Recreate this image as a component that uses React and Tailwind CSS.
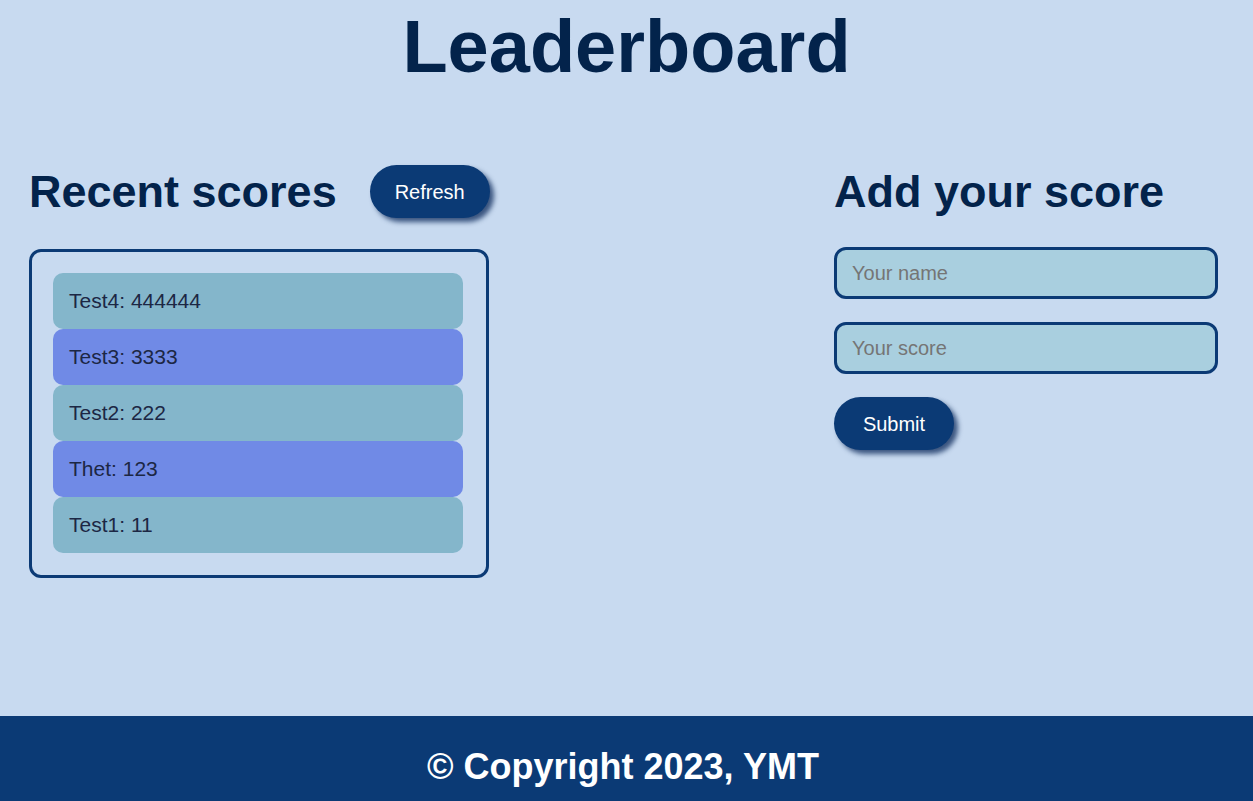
const scores = [
  { name: 'Test4', score: 444444 },
  { name: 'Test3', score: 3333 },
  { name: 'Test2', score: 222 },
  { name: 'Thet', score: 123 },
  { name: 'Test1', score: 11 },
]

export default function App() {
  return (
    <div className="min-h-screen flex flex-col bg-[#c8daf0] text-[#03234b] font-['Liberation_Sans',Arial,sans-serif]">
      <h1 className="mt-[10px] text-center text-[74px] font-bold leading-none">Leaderboard</h1>

      <main className="flex-1 flex justify-between pl-[29px] pr-[35px] mt-[81px]">
        <section className="w-[460px]">
          <div className="flex items-center h-[53px] gap-[33px]">
            <h2 className="shrink-0 whitespace-nowrap text-[45px] font-bold leading-none">Recent scores</h2>
            <button className="shrink-0 w-[120px] h-[53px] rounded-full bg-[#0b3a75] text-white text-[20px] shadow-[4px_4px_5px_rgba(11,40,90,0.75)]">
              Refresh
            </button>
          </div>
          <ul className="mt-[31px] border-[3px] border-[#0b3a75] rounded-[12px] pt-[21px] pb-[22px] pl-[21px] pr-[23px]">
            {scores.map((s, i) => (
              <li key={s.name}
                className={`h-[56px] flex items-center pl-[16px] rounded-[10px] text-[21px] text-[#1c2744] ${i % 2 ? 'bg-[#708ae6]' : 'bg-[#84b6cb]'}`}>
                {s.name}: {s.score}
              </li>
            ))}
          </ul>
        </section>

        <section className="w-[384px]">
          <div className="flex items-center h-[53px]">
            <h2 className="whitespace-nowrap text-[45px] font-bold leading-none">Add your score</h2>
          </div>
          <form className="mt-[29px] flex flex-col gap-[23px] items-start" onSubmit={e => e.preventDefault()}>
            <input placeholder="Your name"
              className="w-full h-[52px] border-[3px] border-[#0b3a75] rounded-[12px] bg-[#a9cfdf] px-[15px] text-[20px] placeholder-[#757575] outline-none" />
            <input placeholder="Your score"
              className="w-full h-[52px] border-[3px] border-[#0b3a75] rounded-[12px] bg-[#a9cfdf] px-[15px] text-[20px] placeholder-[#757575] outline-none" />
            <button type="submit"
              className="w-[120px] h-[53px] rounded-full bg-[#0b3a75] text-white text-[20px] shadow-[4px_4px_5px_rgba(11,40,90,0.75)]">
              Submit
            </button>
          </form>
        </section>
      </main>

      <footer className="h-[85px] bg-[#0b3a75] pt-[33px] pr-[7px] text-center text-white text-[36px] font-bold leading-none">
        © Copyright 2023, YMT
      </footer>
    </div>
  )
}
